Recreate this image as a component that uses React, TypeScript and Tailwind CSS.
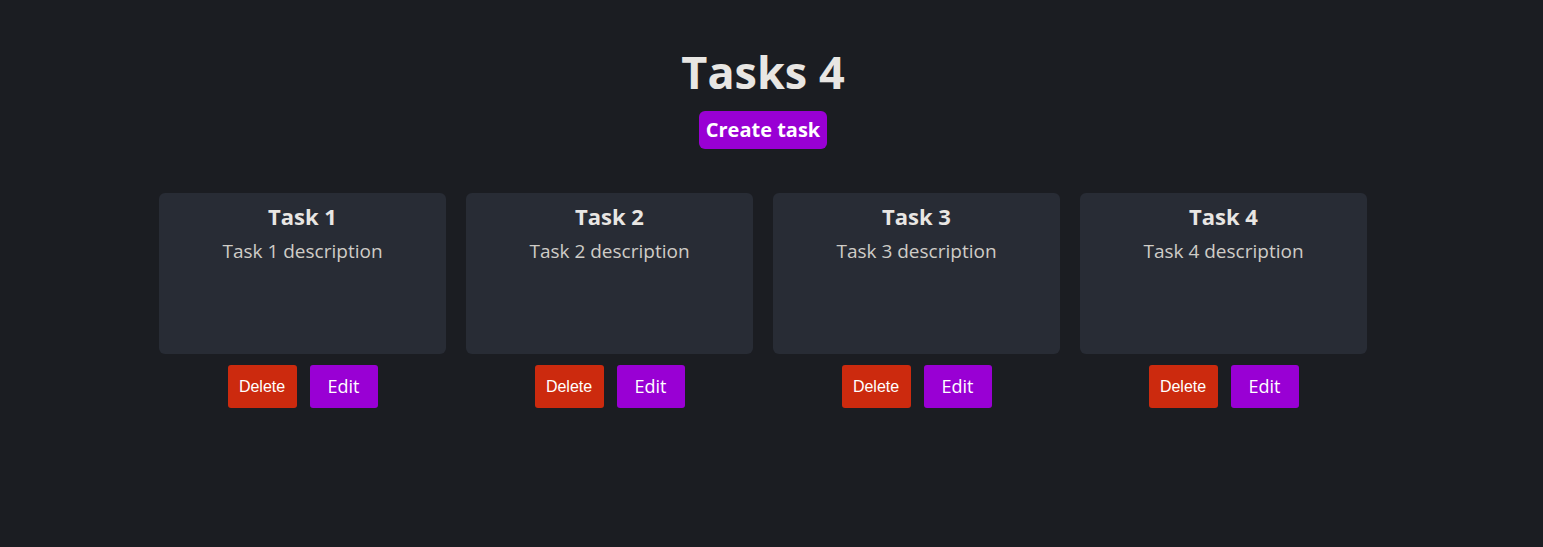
import React from 'react'

type Task = {
    id: number
    title: string
    description: string
}

const tasks: Task[] = [
    { id: 1, title: 'Task 1', description: 'Task 1 description' },
    { id: 2, title: 'Task 2', description: 'Task 2 description' },
    { id: 3, title: 'Task 3', description: 'Task 3 description' },
    { id: 4, title: 'Task 4', description: 'Task 4 description' },
]

function TaskCard({ task }: { task: Task }) {
    return (
        <div className="flex flex-col items-center">
            <div className="w-[287px] h-[161px] rounded-md bg-[#282c35] flex flex-col items-center pt-[8px]">
                <h2 className="text-[22px] leading-[30px] font-bold text-[#e8e6e3]">
                    {task.title}
                </h2>
                <p className="text-[19px] leading-[24px] mt-[8px] text-[#cfccc7]">
                    {task.description}
                </p>
            </div>
            <div className="flex gap-[13px] mt-[11px]">
                <button
                    className="w-[69px] h-[43px] rounded-[3px] bg-[#cc2a0e] text-white text-[16px] font-['Liberation_Sans',Arial,sans-serif]"
                    type="button"
                >
                    Delete
                </button>
                <button
                    className="w-[68px] h-[43px] rounded-[3px] bg-[#9900d4] text-white text-[18px]"
                    type="button"
                >
                    Edit
                </button>
            </div>
        </div>
    )
}

export default function App() {
    return (
        <div className="min-h-[547px] bg-[#1b1d22] pr-[17px] flex flex-col items-center font-['Open_Sans','Noto_Sans',sans-serif] text-[#e8e6e3]">
            <h1 className="text-[45px] leading-[56px] font-bold mt-[44px]">
                Tasks 4
            </h1>
            <button
                className="mt-[11px] h-[38px] px-[7px] rounded-md bg-[#9900d4] text-white text-[20px] font-bold"
                type="button"
            >
                Create task
            </button>
            <div className="flex gap-[20px] mt-[44px]">
                {tasks.map((task) => (
                    <TaskCard key={task.id} task={task} />
                ))}
            </div>
        </div>
    )
}
